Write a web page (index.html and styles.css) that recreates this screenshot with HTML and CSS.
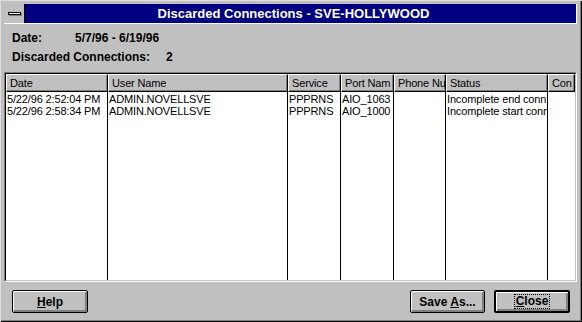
FILE: index.html
```html
<!DOCTYPE html>
<html>
<head>
<meta charset="utf-8">
<link rel="stylesheet" href="styles.css">
</head>
<body>
<div class="window">
  <div class="caption">
    <div class="sysmenu"><span class="dash"></span></div>
    <div class="title">Discarded Connections - SVE-HOLLYWOOD</div>
  </div>
  <div class="info">
    <div class="info-row"><span class="lbl lbl-date">Date:</span><span class="val">5/7/96 - 6/19/96</span></div>
    <div class="info-row"><span class="lbl lbl-disc">Discarded Connections:</span><span class="val">2</span></div>
  </div>
  <div class="list">
    <div class="grid">
      <div class="hdr c1">Date</div>
      <div class="hdr c2">User Name</div>
      <div class="hdr c3">Service</div>
      <div class="hdr c4">Port Nam</div>
      <div class="hdr c5">Phone Nu</div>
      <div class="hdr c6">Status</div>
      <div class="hdr c7">Con</div>

      <div class="col c1"><div class="cell">5/22/96 2:52:04 PM</div><div class="cell">5/22/96 2:58:34 PM</div></div>
      <div class="col c2"><div class="cell">ADMIN.NOVELLSVE</div><div class="cell">ADMIN.NOVELLSVE</div></div>
      <div class="col c3"><div class="cell">PPPRNS</div><div class="cell">PPPRNS</div></div>
      <div class="col c4"><div class="cell">AIO_1063</div><div class="cell">AIO_1000</div></div>
      <div class="col c5"><div class="cell"></div><div class="cell"></div></div>
      <div class="col c6"><div class="cell">Incomplete end conn</div><div class="cell">Incomplete start conn</div></div>
      <div class="col c7 last"><div class="cell"></div><div class="cell"></div></div>
    </div>
  </div>
  <div class="buttons">
    <button class="btn btn-help"><span><span class="u">H</span>elp</span></button>
    <div class="spacer"></div>
    <button class="btn btn-save"><span>Save <span class="u">A</span>s...</span></button>
    <button class="btn btn-close default"><span class="focus"><span class="u">C</span>lose</span></button>
  </div>
</div>
</body>
</html>
```
FILE: styles.css
```css
* { box-sizing: border-box; }
html, body { margin: 0; padding: 0; background: #c0c0c0; }
.window {
  width: 582px;
  height: 322px;
  background: #c0c0c0;
  display: flex;
  flex-direction: column;
  padding: 4px 4px 0 4px;
  box-shadow: inset 1px 1px 0 #dfdfdf, inset -1px -1px 0 #000, inset -2px -2px 0 #808080;
  font-family: "Liberation Sans", Arial, sans-serif;
}
.caption {
  height: 20px;
  display: flex;
  border-right: 1px solid #fff;
  border-bottom: 1px solid #fff;
  margin-right: 1px;
  flex-shrink: 0;
}
.sysmenu {
  width: 21px;
  background: #c0c0c0;
  border-right: 1px solid #000;
  display: flex;
  align-items: center;
  justify-content: center;
}
.dash {
  width: 13px;
  height: 3px;
  background: #fff;
  border: 1px solid #000;
  box-shadow: 1px 1px 0 #808080;
}
.title {
  flex: 1;
  background: #000080;
  color: #fff;
  font-weight: bold;
  font-size: 13px;
  text-align: center;
  line-height: 19px;
  padding-right: 14px;
}
.info {
  padding: 6px 0 0 8px;
  height: 48px;
  flex-shrink: 0;
}
.info-row {
  display: flex;
  font-weight: bold;
  font-size: 12px;
  height: 19px;
  line-height: 17px;
  color: #000;
}
.lbl-date { width: 63px; }
.lbl-disc { width: 154px; }
.list {
  height: 210px;
  flex-shrink: 0;
  margin-right: 1px;
  border-top: 1px solid #808080;
  border-left: 1px solid #808080;
  border-right: 1px solid #fff;
  border-bottom: 1px solid #fff;
  background: #fff;
}
.grid {
  height: 100%;
  border-top: 1px solid #000;
  border-left: 1px solid #000;
  border-right: 1px solid #c0c0c0;
  border-bottom: 1px solid #c0c0c0;
  display: grid;
  grid-template-columns: 102px 180px 53px 53px 52px 102px 1fr;
  grid-template-rows: 18px 1fr;
  font-size: 11px;
  letter-spacing: -0.15px;
  color: #000;
}
.hdr {
  background: #c0c0c0;
  border-top: 1px solid #fff;
  border-left: 1px solid #fff;
  border-right: 1px solid #000;
  border-bottom: 1px solid #000;
  box-shadow: inset -1px -1px 0 #808080;
  padding: 1px 0 0 3px;
  line-height: 14px;
  white-space: nowrap;
  overflow: hidden;
}
.col {
  border-right: 1px solid #000;
  overflow: hidden;
  padding-top: 1px;
}
.col.last { border-right: none; }
.cell {
  height: 12px;
  line-height: 12px;
  padding-left: 1px;
  white-space: nowrap;
}
.buttons {
  display: flex;
  align-items: flex-start;
  padding: 8px 8px 0 8px;
}
.spacer { flex: 1; }
.btn {
  font-family: "Liberation Sans", Arial, sans-serif;
  font-weight: bold;
  font-size: 12px;
  color: #000;
  background: #c0c0c0;
  width: 76px;
  height: 23px;
  padding: 0;
  margin: 0;
  border: 1px solid #000;
  border-radius: 2px;
  box-shadow: inset 1px 1px 0 #fff, inset -2px -2px 0 #808080, inset -1px -1px 0 #808080;
  display: flex;
  align-items: center;
  justify-content: center;
}
.btn-save { width: 75px; margin-right: 9px; }
.btn.default {
  border: 2px solid #000;
}
.focus {
  border: 1px dotted #000;
  padding: 0 1px;
  line-height: 13px;
}
.u { text-decoration: underline; }
```
